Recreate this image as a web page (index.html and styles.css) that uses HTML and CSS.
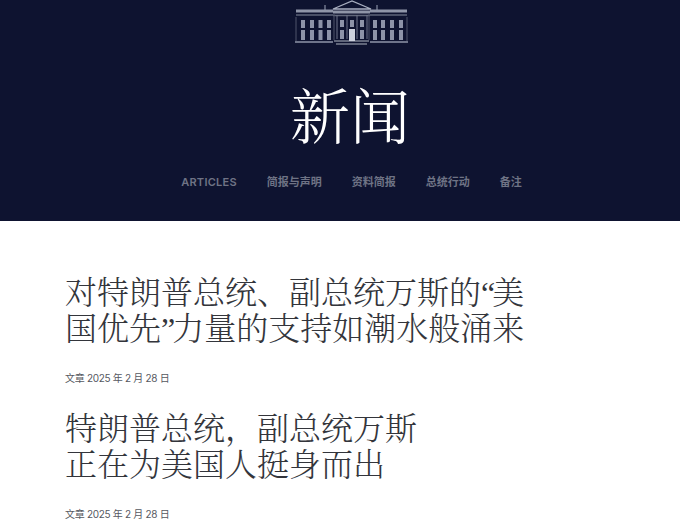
FILE: index.html
```html
<!DOCTYPE html>
<html lang="zh-CN">
<head>
  <meta charset="UTF-8" />
  <title>新闻</title>
  <link rel="stylesheet" href="styles.css">
</head>
<body>
  <header class="hero">
    <svg class="logo" viewBox="0 0 113 45" width="113" height="45" fill="none" stroke="#a9afc0" stroke-width="1">
      <path d="M38 9 L57 1 L76 9 Z" stroke-width="1.300" />
      <path d="M30 5 V10 M82 5 V10" stroke="#6f758a" stroke-width="1.500" />
      <path d="M1 11 H38 M75 11 H112 M38 12 H75" stroke="#8f95a8" stroke-width="3" />
      <path d="M1 15 H38 M75 15 H112 M38 15.500 H75" stroke="#5f6579" stroke-width="1.500" />
      <path d="M1 17 V41 M112 17 V41 M39 14 V40 M74 14 V40" stroke="#4f556a" />
      <path d="M0 42 H38 M75 42 H113" stroke="#8f95a8" stroke-width="1.500" />
      <path d="M39 41 H74 M41 44 H72" stroke="#5f6579" stroke-width="2" />
      <g stroke-width="4" stroke="#8d93a8">
        <path d="M8 20 V28 M17 20 V28 M25.500 20 V28 M34 20 V28 M80 20 V28 M88 20 V28 M97 20 V28 M106 20 V28" />
        <path d="M8 30 V40 M17 30 V40 M25.500 30 V40 M34 30 V40 M80 30 V40 M88 30 V40 M97 30 V40 M106 30 V40" />
        <path d="M47 20 V27 M57 20 V27 M67 20 V27 M47 30 V39 M67 30 V39" />
      </g>
      <path d="M57 29 V41" stroke="#ccd0dc" stroke-width="6" />
      <path d="M42 15 V39 M52 15 V39 M62 15 V39 M72 15 V39" stroke="#6f758a" />
    </svg>
    <h1 class="hero-title">新闻</h1>
    <nav class="hero-nav">
      <a class="nav-latin">ARTICLES</a>
      <a>简报与声明</a>
      <a>资料简报</a>
      <a>总统行动</a>
      <a>备注</a>
    </nav>
  </header>
  <main class="posts">
    <article class="post">
      <h2 class="post-title">
        <span class="title-line">对特朗普总统、副总统万斯的<span class="quote">“</span>美</span>
        <span class="title-line">国优先<span class="quote">”</span>力量的支持如潮水般涌来</span>
      </h2>
      <p class="post-meta">文章 2025 年 2 月 28 日</p>
    </article>
    <article class="post">
      <h2 class="post-title">
        <span class="title-line">特朗普总统，副总统万斯</span>
        <span class="title-line">正在为美国人挺身而出</span>
      </h2>
      <p class="post-meta">文章 2025 年 2 月 28 日</p>
    </article>
  </main>
</body>
</html>
```

FILE: styles.css
```css
html, body {
  margin: 0;
  height: 530px;
  overflow: hidden;
  background: #fff;
}

body {
  font-family: Inter, "Noto Sans CJK SC", sans-serif;
}

.hero {
  height: 221px;
  padding-left: 20px;
  box-sizing: border-box;
  background: #0e1330;
  color: #fff;
  display: flex;
  flex-direction: column;
  align-items: center;
}

.logo {
  display: block;
  margin-left: 3px;
}

.hero-title {
  margin: 33px 0 0;
  font-family: "Noto Serif CJK SC", "Liberation Serif", "Noto Sans CJK SC", serif;
  font-size: 60px;
  font-weight: 300;
  line-height: 70px;
}

.hero-nav {
  margin-top: 26px;
  padding-left: 3px;
  display: flex;
  gap: 30px;
  font-size: 11px;
  line-height: 16px;
  font-weight: 700;
  color: #6f7385;
}

.nav-latin {
  font-weight: 600;
  letter-spacing: 0.25px;
}

.posts {
  padding: 51px 0 0 65px;
  color: #33353b;
}

.post {
  margin-bottom: 23px;
}

.post-title {
  margin: 0;
  font-family: "Noto Serif CJK SC", "Liberation Serif", "Noto Sans CJK SC", serif;
  font-size: 32px;
  font-weight: 300;
}

.title-line {
  display: block;
  height: 36px;
  line-height: 36px;
}

.quote {
  font-family: "Liberation Serif", serif;
  letter-spacing: -3px;
}

.post-meta {
  margin: 27px 0 0;
  font-size: 10px;
  line-height: 14px;
  letter-spacing: -0.3px;
  color: #55585f;
}
```
